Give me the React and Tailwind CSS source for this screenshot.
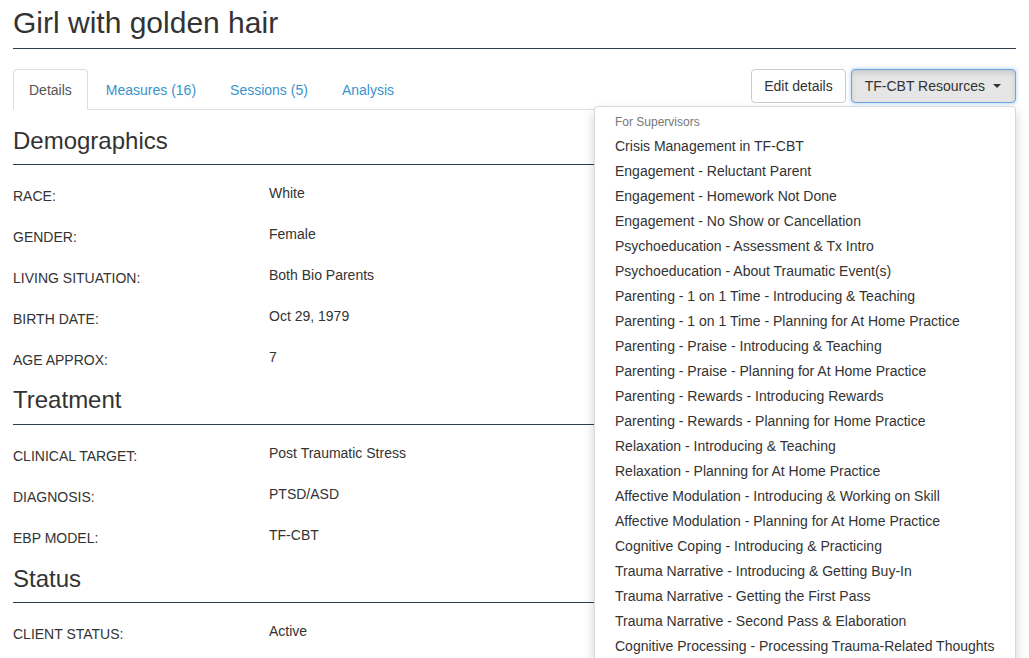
import React from "react";

const demographics = [
  ["RACE:", "White"],
  ["GENDER:", "Female"],
  ["LIVING SITUATION:", "Both Bio Parents"],
  ["BIRTH DATE:", "Oct 29, 1979"],
  ["AGE APPROX:", "7"],
];

const treatment = [
  ["CLINICAL TARGET:", "Post Traumatic Stress"],
  ["DIAGNOSIS:", "PTSD/ASD"],
  ["EBP MODEL:", "TF-CBT"],
];

const status = [["CLIENT STATUS:", "Active"]];

const resources = [
  "Crisis Management in TF-CBT",
  "Engagement - Reluctant Parent",
  "Engagement - Homework Not Done",
  "Engagement - No Show or Cancellation",
  "Psychoeducation - Assessment & Tx Intro",
  "Psychoeducation - About Traumatic Event(s)",
  "Parenting - 1 on 1 Time - Introducing & Teaching",
  "Parenting - 1 on 1 Time - Planning for At Home Practice",
  "Parenting - Praise - Introducing & Teaching",
  "Parenting - Praise - Planning for At Home Practice",
  "Parenting - Rewards - Introducing Rewards",
  "Parenting - Rewards - Planning for Home Practice",
  "Relaxation - Introducing & Teaching",
  "Relaxation - Planning for At Home Practice",
  "Affective Modulation - Introducing & Working on Skill",
  "Affective Modulation - Planning for At Home Practice",
  "Cognitive Coping - Introducing & Practicing",
  "Trauma Narrative - Introducing & Getting Buy-In",
  "Trauma Narrative - Getting the First Pass",
  "Trauma Narrative - Second Pass & Elaboration",
  "Cognitive Processing - Processing Trauma-Related Thoughts",
];

function Section({ title, rows, top }) {
  return (
    <section>
      <h3 className={`${top} pb-[10px] border-b border-[#2c3e50] text-[24px] leading-[1.1] font-normal`}>
        {title}
      </h3>
      <div className="mt-[10px]">
        {rows.map(([label, value]) => (
          <div key={label} className="flex h-[41px] text-[14px] leading-[20px]">
            <div className="w-[256px] pt-[11px]">{label}</div>
            <div className="pt-[8px]">{value}</div>
          </div>
        ))}
      </div>
    </section>
  );
}

export default function App() {
  const tabs = ["Details", "Measures (16)", "Sessions (5)", "Analysis"];

  return (
    <div className="h-[658px] overflow-hidden bg-white px-[13px] text-[#333] font-['Liberation_Sans',Arial,sans-serif]">
      <h1 className="mt-[6px] pb-[9px] border-b border-[#2c3e50] text-[30px] leading-[33px] font-normal">
        Girl with golden hair
      </h1>

      {/* Tabs + actions */}
      <div className="mt-[20px] flex justify-between items-start border-b border-[#ddd]">
        <ul className="flex">
          {tabs.map((t, i) => (
            <li key={t} className="-mb-px mr-[2px]">
              <a
                className={
                  i === 0
                    ? "block px-[15px] pt-[10px] pb-[9px] text-[14px] leading-[20px] text-[#555] bg-white border border-[#ddd] border-b-white rounded-t-[4px]"
                    : "block px-[15px] pt-[10px] pb-[9px] text-[14px] leading-[20px] text-[#3a93cd] border border-transparent"
                }
              >
                {t}
              </a>
            </li>
          ))}
        </ul>

        <div className="flex gap-[5px]">
          <button className="px-[12px] py-[6px] text-[14px] leading-[20px] bg-white border border-[#ccc] rounded-[4px] text-[#333]">
            Edit details
          </button>
          <div className="relative">
            <button className="flex items-center pl-[13px] pr-[14px] py-[6px] text-[14px] leading-[20px] bg-[#e6e6e6] border border-[#6fa6dc] rounded-[4px] text-[#333] shadow-[inset_0_3px_5px_rgba(0,0,0,0.125),0_0_4px_rgba(102,175,233,0.6)]">
              TF-CBT Resources
              <span className="ml-[8px] inline-block w-0 h-0 border-x-[4px] border-x-transparent border-t-[4px] border-t-[#333]" />
            </button>
            <div className="absolute z-10 right-0 top-[calc(100%+3px)] w-[422px] bg-white border border-black/15 rounded-[4px] pt-[4px] pb-[5px] shadow-[0_6px_12px_rgba(0,0,0,0.175)]">
              <div className="px-[20px] py-[3px] text-[12px] leading-[17px] text-[#777]">For Supervisors</div>
              {resources.map((r) => (
                <div key={r} className="px-[20px] py-[3px] text-[14px] leading-[19px] text-[#333] whitespace-nowrap">
                  {r}
                </div>
              ))}
            </div>
          </div>
        </div>
      </div>

      <Section title="Demographics" rows={demographics} top="mt-[18px]" />
      <Section title="Treatment" rows={treatment} top="mt-[7px]" />
      <Section title="Status" rows={status} top="mt-[8px]" />
    </div>
  );
}
